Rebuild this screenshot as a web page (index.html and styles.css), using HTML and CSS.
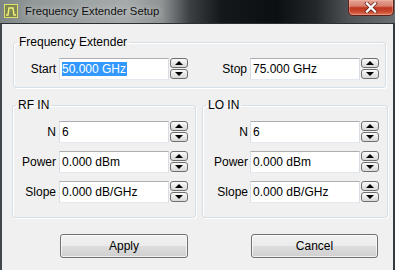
FILE: index.html
```html
<!DOCTYPE html>
<html>
<head>
<meta charset="utf-8">
<title>Frequency Extender Setup</title>
<link rel="stylesheet" href="styles.css">
</head>
<body>
<div class="window">
  <div class="titlebar">
    <svg class="app-icon" width="14" height="14" viewBox="0 0 14 14">
      <rect x="0.5" y="0.5" width="13" height="13" fill="#7d8552" stroke="#dede6a"/>
      <path d="M2 11 H4 L5 4 H9 L10 11 H12" fill="none" stroke="#f4f47a" stroke-width="1.4"/>
    </svg>
    <span class="title">Frequency Extender Setup</span>
    <div class="close">
      <svg width="14" height="11" viewBox="0 0 14 11">
        <path d="M3 1.5 L11 9.5 M11 1.5 L3 9.5" stroke="#5a1a12" stroke-width="3.8" stroke-linecap="square"/>
        <path d="M3 1.5 L11 9.5 M11 1.5 L3 9.5" stroke="#ffffff" stroke-width="2.4" stroke-linecap="square"/>
      </svg>
    </div>
  </div>
  <div class="client">
    <fieldset class="group group-main">
      <legend>Frequency Extender</legend>
      <div class="main-row">
        <div class="field">
          <label class="lbl w42">Start</label>
          <div class="input"><span class="sel">50.000 GHz</span></div>
          <div class="spin"><span class="sb"><i class="up"></i></span><span class="sb"><i class="down"></i></span></div>
        </div>
        <div class="field stop">
          <label class="lbl">Stop</label>
          <div class="input">75.000 GHz</div>
          <div class="spin"><span class="sb"><i class="up"></i></span><span class="sb"><i class="down"></i></span></div>
        </div>
      </div>
    </fieldset>
    <div class="groups">
      <fieldset class="group rf">
        <legend>RF IN</legend>
        <div class="rows">
          <div class="field">
            <label class="lbl w43">N</label>
            <div class="input">6</div>
            <div class="spin"><span class="sb"><i class="up"></i></span><span class="sb"><i class="down"></i></span></div>
          </div>
          <div class="field">
            <label class="lbl w43">Power</label>
            <div class="input">0.000 dBm</div>
            <div class="spin"><span class="sb"><i class="up"></i></span><span class="sb"><i class="down"></i></span></div>
          </div>
          <div class="field">
            <label class="lbl w43">Slope</label>
            <div class="input">0.000 dB/GHz</div>
            <div class="spin"><span class="sb"><i class="up"></i></span><span class="sb"><i class="down"></i></span></div>
          </div>
        </div>
      </fieldset>
      <fieldset class="group lo">
        <legend>LO IN</legend>
        <div class="rows">
          <div class="field">
            <label class="lbl w45">N</label>
            <div class="input">6</div>
            <div class="spin"><span class="sb"><i class="up"></i></span><span class="sb"><i class="down"></i></span></div>
          </div>
          <div class="field">
            <label class="lbl w45">Power</label>
            <div class="input">0.000 dBm</div>
            <div class="spin"><span class="sb"><i class="up"></i></span><span class="sb"><i class="down"></i></span></div>
          </div>
          <div class="field">
            <label class="lbl w45">Slope</label>
            <div class="input">0.000 dB/GHz</div>
            <div class="spin"><span class="sb"><i class="up"></i></span><span class="sb"><i class="down"></i></span></div>
          </div>
        </div>
      </fieldset>
    </div>
    <div class="buttons">
      <button class="btn apply">Apply</button>
      <button class="btn cancel">Cancel</button>
    </div>
  </div>
</div>
</body>
</html>
```

FILE: styles.css
```css
html, body {
  margin: 0;
  padding: 0;
  width: 395px;
  height: 270px;
  overflow: hidden;
  background: #f0f0f0;
}

.window {
  width: 395px;
  height: 270px;
  display: flex;
  flex-direction: column;
  font-family: "Liberation Sans", Arial, sans-serif;
  font-size: 12px;
  color: #000;
}

.titlebar {
  height: 23px;
  flex: none;
  display: flex;
  align-items: flex-start;
  background: linear-gradient(90deg, #7e8586 0%, #929898 8%, #a6aaaa 32%, #8f9394 41%, #3c4043 48%, #15181b 56%, #0c0f12 70%, #23272a 80%, #4e5255 88%, #6a6e70 100%);
}

.app-icon {
  margin: 4px 0 0 4px;
  flex: none;
}

.title {
  margin: 4px 0 0 7px;
  font-size: 11.3px;
  line-height: 14px;
  color: #111;
  text-shadow: 0 0 6px rgba(255, 255, 255, 0.7);
}

.close {
  margin-left: auto;
  margin-right: 1px;
  width: 46px;
  height: 16px;
  box-sizing: border-box;
  border: 1px solid #5c2119;
  border-top: none;
  border-radius: 0 0 5px 5px;
  background: linear-gradient(180deg, #e4a293 0%, #d7806f 40%, #c0371f 52%, #c8452d 75%, #e0785c 100%);
  display: flex;
  align-items: center;
  justify-content: center;
  box-shadow: inset 0 0 0 1px rgba(255, 200, 190, 0.35);
}

.client {
  flex: 1;
  border-top: 1px solid #2c3033;
  border-left: 2px solid #41464a;
  border-right: 2px solid #353a3e;
  background: #f0f0f0;
  display: flex;
  flex-direction: column;
}

.group {
  margin: 0;
  padding: 0;
  border: 1px solid #d5dfe5;
  border-radius: 3px;
  box-shadow: inset 1px 1px 0 #ffffff, 1px 1px 0 #ffffff;
  min-width: 0;
}

.group legend {
  margin-left: 3px;
  padding: 0 2px;
  line-height: 15px;
  font-size: 12px;
}

.group-main {
  margin: 11px 7px 0 11px;
}

.main-row {
  display: flex;
  padding: 8px 0 7px 0;
}

.main-row .stop {
  margin-left: auto;
  margin-right: 6px;
}

.field {
  display: flex;
  align-items: center;
  height: 22px;
}

.lbl {
  text-align: right;
  margin-right: 3px;
  white-space: nowrap;
}

.w42 { width: 42px; }
.w43 { width: 43px; }
.w45 { width: 45px; margin-right: 2px; }

.input {
  width: 110px;
  height: 22px;
  box-sizing: border-box;
  background: #fff;
  border: 1px solid #d9dde4;
  border-top-color: #abadb3;
  border-bottom-color: #e3e9ef;
  padding: 0 2px;
  line-height: 20px;
  white-space: nowrap;
}

.sel {
  background: #3399ff;
  color: #fff;
  display: inline-block;
  line-height: 14px;
  padding-right: 1px;
}

.spin {
  margin-left: 1px;
  width: 18px;
  height: 22px;
  display: flex;
  flex-direction: column;
  justify-content: space-between;
  padding: 0 0 1px 0;
  box-sizing: border-box;
}

.sb {
  height: 10px;
  box-sizing: border-box;
  border: 1px solid #6f6f6f;
  border-radius: 3px;
  background: linear-gradient(180deg, #fbfbfb 0%, #e9e9e9 50%, #d8d8d8 100%);
  display: flex;
  align-items: center;
  justify-content: center;
}

.sb i {
  width: 0;
  height: 0;
  border-left: 4px solid transparent;
  border-right: 4px solid transparent;
}

.sb .up {
  border-bottom: 4px solid #000;
}

.sb .down {
  border-top: 4px solid #000;
}

.groups {
  display: flex;
  gap: 6px;
  margin: 10px 5px 0 10px;
}

.rf {
  width: 184px;
  box-sizing: border-box;
}

.lo {
  width: 186px;
  box-sizing: border-box;
}

.rows {
  display: flex;
  flex-direction: column;
  gap: 8px;
  padding: 8px 0 14px 0;
}

.buttons {
  display: flex;
  margin: 16px 0 0 58px;
  gap: 63px;
}

.btn {
  height: 24px;
  box-sizing: border-box;
  border: 1px solid #707070;
  border-radius: 3px;
  background: linear-gradient(180deg, #f2f2f2 0%, #ebebeb 48%, #dddddd 52%, #cfcfcf 100%);
  box-shadow: inset 0 0 0 1px rgba(255, 255, 255, 0.7);
  font-family: "Liberation Sans", Arial, sans-serif;
  font-size: 12px;
  color: #000;
  padding: 0;
}

.apply { width: 128px; }
.cancel { width: 127px; }
```
